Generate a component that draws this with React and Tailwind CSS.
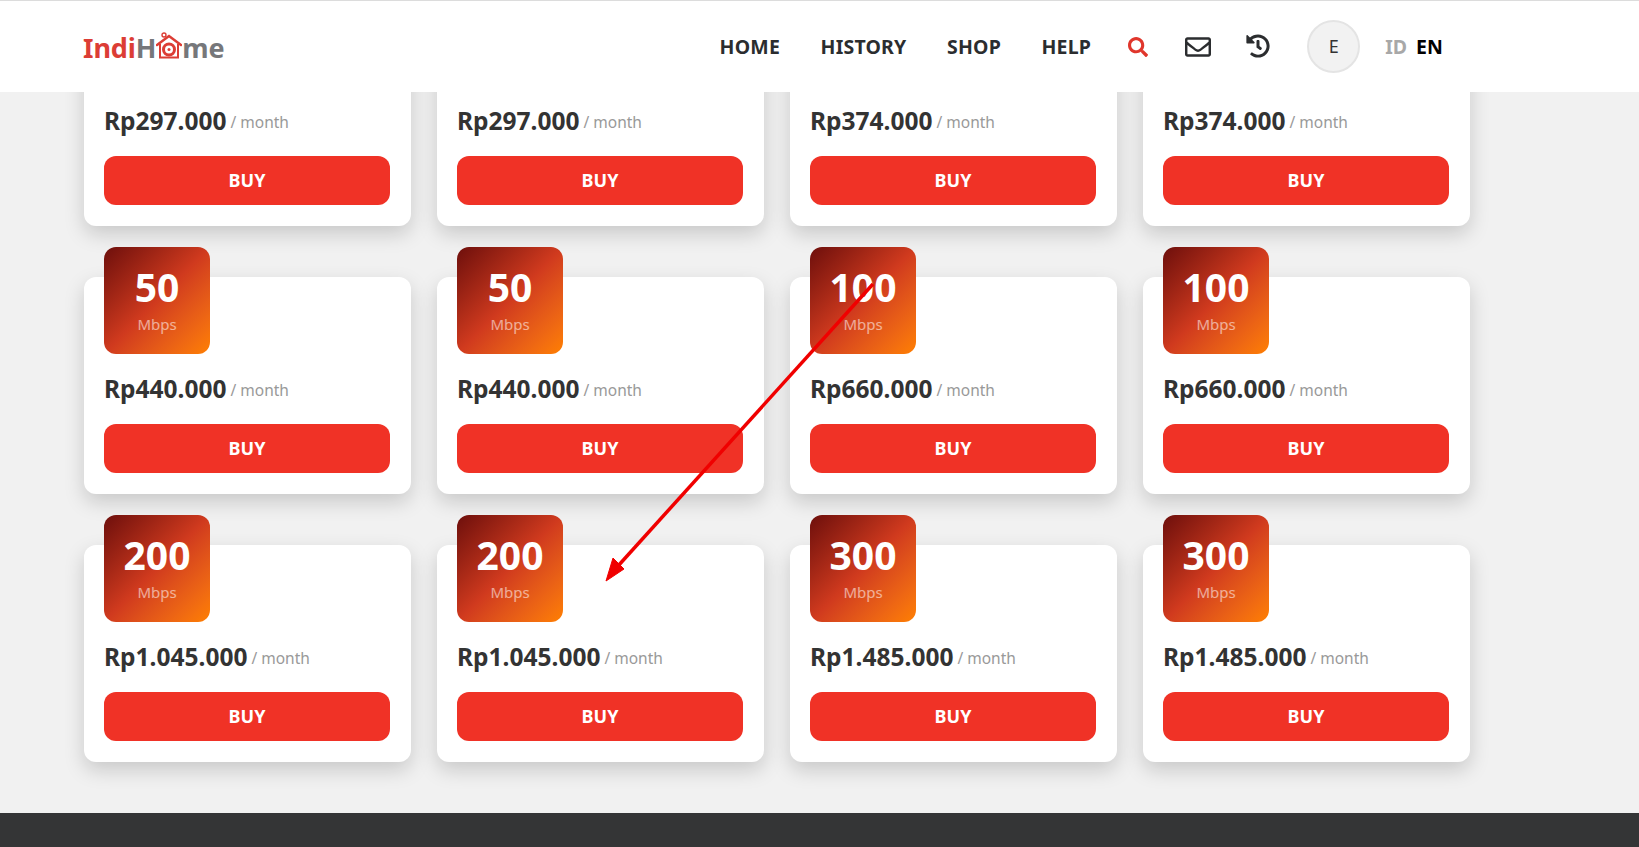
import { FaSearch, FaRegEnvelope, FaHistory } from 'react-icons/fa';

const rows = [
  [
    { speed: '50', price: 'Rp297.000' },
    { speed: '50', price: 'Rp297.000' },
    { speed: '50', price: 'Rp374.000' },
    { speed: '50', price: 'Rp374.000' },
  ],
  [
    { speed: '50', price: 'Rp440.000' },
    { speed: '50', price: 'Rp440.000' },
    { speed: '100', price: 'Rp660.000' },
    { speed: '100', price: 'Rp660.000' },
  ],
  [
    { speed: '200', price: 'Rp1.045.000' },
    { speed: '200', price: 'Rp1.045.000' },
    { speed: '300', price: 'Rp1.485.000' },
    { speed: '300', price: 'Rp1.485.000' },
  ],
];

function Logo() {
  return (
    <div className="mt-[2px] flex items-center text-[27px] font-bold leading-none tracking-[-0.1px]">
      <span className="text-[#dc3d35]">Indi</span>
      <span className="text-[#76777a]">H</span>
      <svg width="26" height="27" viewBox="0 0 26 27" className="-mt-[5px]">
        <path d="M1 13 L13 4 L25 13" fill="none" stroke="#dc3d35" strokeWidth="2.5" strokeLinecap="round" />
        <path d="M4 12 V25.5 H22 V12" fill="none" stroke="#dc3d35" strokeWidth="2" />
        <circle cx="13" cy="17.5" r="5.5" fill="none" stroke="#dc3d35" strokeWidth="3" />
        <circle cx="13" cy="17.5" r="1.5" fill="#dc3d35" />
        <circle cx="8" cy="3" r="2" fill="none" stroke="#dc3d35" strokeWidth="1.4" />
      </svg>
      <span className="text-[#76777a]">me</span>
    </div>
  );
}

function Header() {
  return (
    <header className="relative z-10 flex h-[92px] shrink-0 items-center border-t border-[#dcdcdc] bg-white pl-[83px]">
      <Logo />
      <nav className="ml-[495px] flex items-center gap-[40.5px] text-[19.5px] font-bold tracking-[0.2px] text-[#2b2d2f]">
        <a>HOME</a>
        <a>HISTORY</a>
        <a>SHOP</a>
        <a>HELP</a>
      </nav>
      <FaSearch className="ml-[37px] text-[20px] text-[#e0362c]" />
      <FaRegEnvelope className="ml-[37px] text-[26px] text-[#2b2d2f]" />
      <FaHistory className="ml-[35px] -mt-[1px] text-[24px] text-[#2b2d2f]" />
      <div className="ml-[37px] flex h-[53px] w-[53px] items-center justify-center rounded-full border-2 border-[#e4e4e4] bg-[#f2f2f2] text-[18px] text-[#333]">
        E
      </div>
      <div className="ml-[25px] flex gap-[9px] text-[19.5px] font-bold">
        <span className="text-[#a8a8a8]">ID</span>
        <span className="text-black">EN</span>
      </div>
    </header>
  );
}

function PlanCard({ speed, price }) {
  return (
    <div className="h-[217px] w-[327px] rounded-[12px] bg-white px-[20px] shadow-[0_8px_20px_rgba(0,0,0,0.17)]">
      <div className="-mt-[30px] flex h-[107px] w-[106px] flex-col items-center rounded-[12px] bg-gradient-to-br from-[#6e0f0c] via-[#d03a1e] to-[#ff7f00] pt-[14px]">
        <span className="text-[39px] font-bold leading-[52px] text-white">{speed}</span>
        <span className="mt-[1px] text-[15px] leading-[20px] text-white/55">Mbps</span>
      </div>
      <div className="mt-[18px] flex items-center">
        <span className="text-[24.5px] font-bold leading-[34px] text-[#333]">{price}</span>
        <span className="ml-[4px] mt-[3px] text-[15.5px] text-[#999]">/ month</span>
      </div>
      <button className="mt-[18px] h-[49px] w-[286px] rounded-[12px] bg-[#f03226] text-[18px] font-bold text-white">
        BUY
      </button>
    </div>
  );
}

export default function App() {
  return (
    <div className="relative flex h-screen flex-col overflow-hidden bg-[#f1f1f1] font-['Noto_Sans',sans-serif]">
      <Header />
      <main className="flex-1 overflow-hidden pl-[84px]">
        <div className="-mt-[83px] flex flex-col gap-[51px]">
          {rows.map((row, i) => (
            <div key={i} className="flex gap-[26px]">
              {row.map((plan, j) => (
                <PlanCard key={j} {...plan} />
              ))}
            </div>
          ))}
        </div>
      </main>
      <footer className="h-[34px] shrink-0 bg-[#343536]" />
      {/* red annotation arrow drawn over the page */}
      <svg className="absolute inset-0 z-20 h-full w-full" viewBox="0 0 1639 847">
        <line x1="873" y1="284" x2="618" y2="566" stroke="#f00000" strokeWidth="3.5" />
        <polygon points="606,581 613,558 624,569" fill="#f00000" stroke="#f00000" strokeWidth="1" />
      </svg>
    </div>
  );
}
